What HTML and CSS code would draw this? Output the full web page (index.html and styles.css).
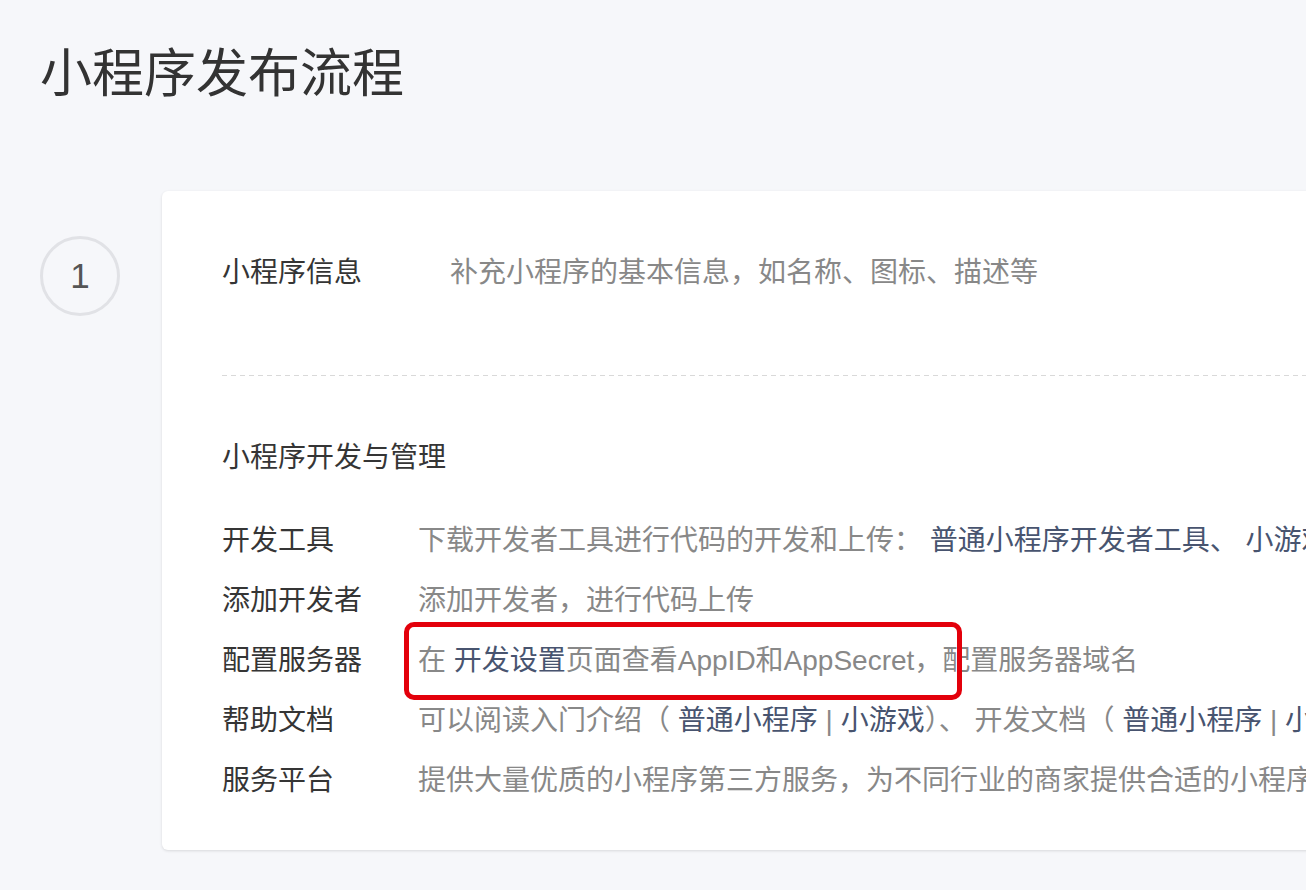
FILE: index.html
```html
<!DOCTYPE html>
<html lang="zh-CN">
<head>
<meta charset="utf-8">
<title>小程序发布流程</title>
<link rel="stylesheet" href="styles.css">
</head>
<body>
<div class="page">
  <h1 class="title">小程序发布流程</h1>
  <div class="step">
    <div class="num">1</div>
    <div class="card">
      <div class="info-row">
        <span class="info-label">小程序信息</span>
        <span class="desc">补充小程序的基本信息，如名称、图标、描述等</span>
      </div>
      <div class="divider"></div>
      <div class="section-title">小程序开发与管理</div>
      <div class="rows">
        <div class="row">
          <span class="label">开发工具</span>
          <span class="desc">下载开发者工具进行代码的开发和上传： <a class="link">普通小程序开发者工具、</a> <a class="link">小游戏开发者工具</a></span>
        </div>
        <div class="row">
          <span class="label">添加开发者</span>
          <span class="desc">添加开发者，进行代码上传</span>
        </div>
        <div class="row">
          <span class="label">配置服务器</span>
          <span class="desc boxed">在 <a class="link">开发设置</a>页面查看AppID和AppSecret，配置服务器域名<span class="highlight"></span></span>
        </div>
        <div class="row">
          <span class="label">帮助文档</span>
          <span class="desc">可以阅读入门介绍（ <a class="link">普通小程序</a> | <a class="link">小游戏</a>）、 开发文档（ <a class="link">普通小程序</a> | <a class="link">小游戏</a>）</span>
        </div>
        <div class="row">
          <span class="label">服务平台</span>
          <span class="desc">提供大量优质的小程序第三方服务，为不同行业的商家提供合适的小程序解决方案</span>
        </div>
      </div>
    </div>
  </div>
</div>
</body>
</html>
```
FILE: styles.css
```css
html, body {
  margin: 0;
  padding: 0;
}
body {
  background: #f6f7fa;
  font-family: "Liberation Sans", "Noto Sans CJK SC", sans-serif;
  color: #353535;
  overflow: hidden;
  height: 890px;
}
.page {
  padding-left: 40px;
}
.title {
  margin: 38px 0 0;
  font-size: 52px;
  line-height: 72px;
  font-weight: 400;
  color: #333;
  white-space: nowrap;
}
.step {
  display: flex;
  align-items: flex-start;
  margin-top: 81px;
}
.num {
  flex: none;
  box-sizing: border-box;
  width: 80px;
  height: 80px;
  margin-top: 45px;
  margin-right: 42px;
  border: 3px solid #e1e2e6;
  border-radius: 50%;
  display: flex;
  align-items: center;
  justify-content: center;
  font-size: 35px;
  color: #555;
}
.card {
  flex: none;
  width: 1300px;
  background: #fff;
  border-radius: 6px;
  box-shadow: 0 1px 3px rgba(0, 0, 0, 0.12);
  padding: 49px 0 42px 60px;
  white-space: nowrap;
  font-size: 28px;
}
.info-row {
  display: flex;
  align-items: center;
  height: 60px;
}
.info-label {
  width: 228px;
  flex: none;
}
.desc {
  color: #888;
}
.link {
  color: #48546f;
  text-decoration: none;
}
.divider {
  margin-top: 75px;
  height: 1px;
  background: repeating-linear-gradient(to right, #d9d9d9 0, #d9d9d9 5px, transparent 5px, transparent 9px);
}
.section-title {
  margin-top: 52px;
  height: 60px;
  line-height: 60px;
}
.rows {
  margin-top: 20px;
}
.row {
  display: flex;
  align-items: center;
  height: 60px;
}
.label {
  width: 196px;
  flex: none;
}
.boxed {
  position: relative;
}
.highlight {
  position: absolute;
  left: -14px;
  top: -16px;
  width: 558px;
  height: 78px;
  box-sizing: border-box;
  border: 5px solid #e3000b;
  border-radius: 10px;
}
```
